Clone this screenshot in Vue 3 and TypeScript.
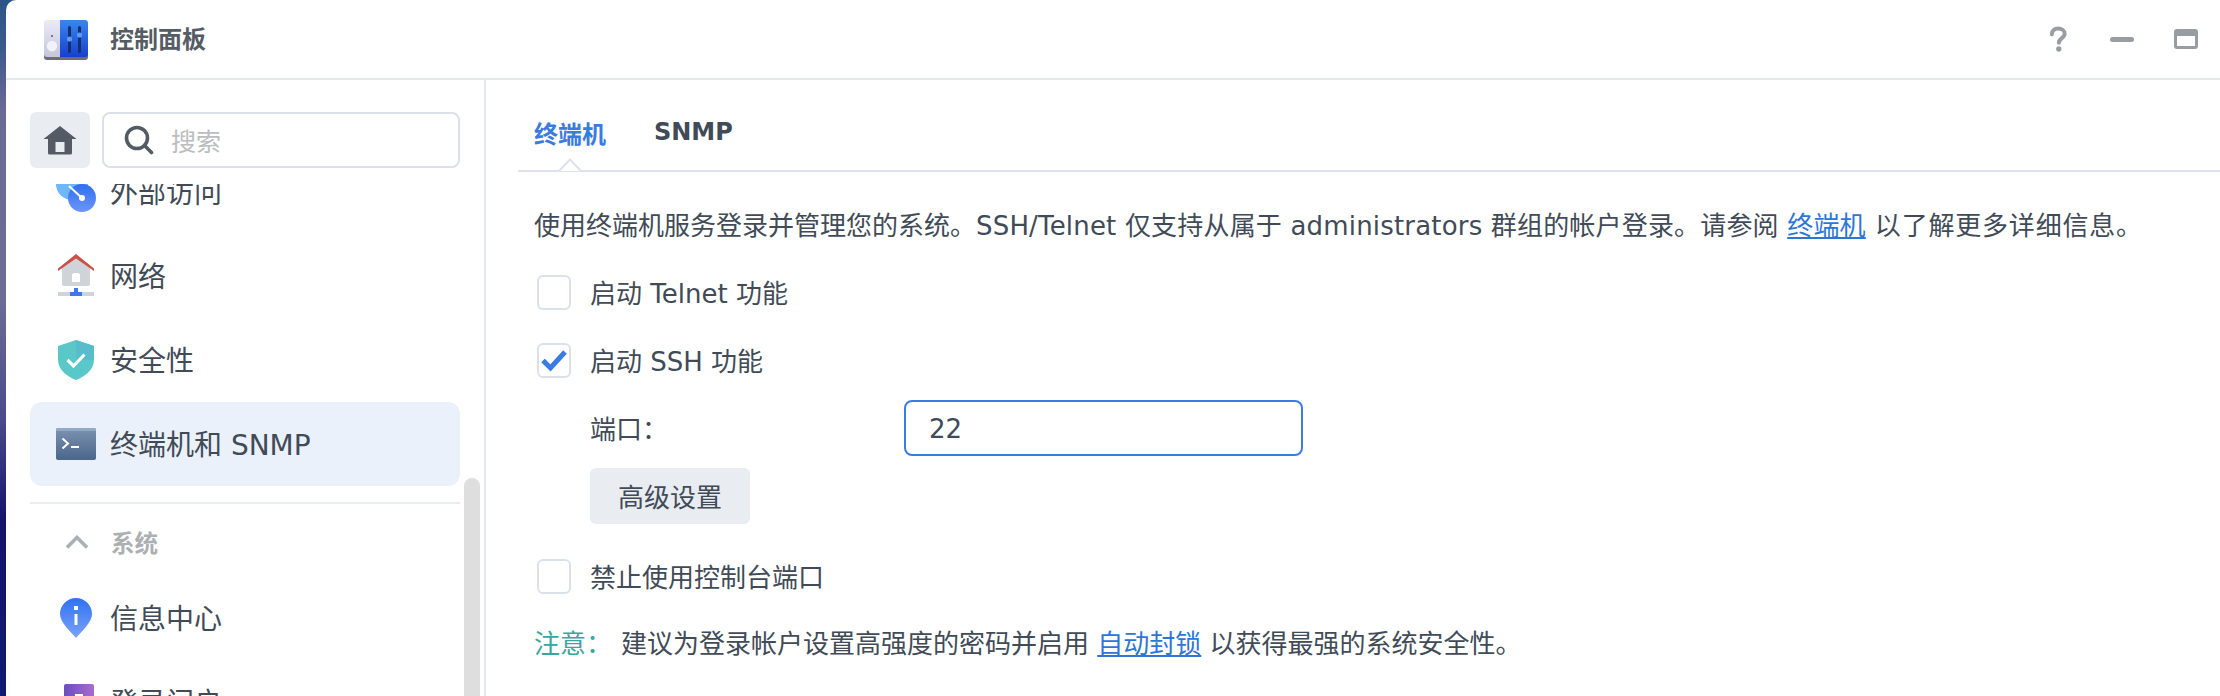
<script setup lang="ts">
const port: string = '22'
</script>

<template>
  <div class="page">
    <div class="window">
      <header class="titlebar">
        <svg class="app-icon" width="44" height="40" viewBox="0 0 44 40">
          <defs>
            <linearGradient id="ai-l" x1="0" y1="0" x2="0" y2="1"><stop offset="0" stop-color="#eceaf8"/><stop offset="1" stop-color="#c6c6dc"/></linearGradient>
            <linearGradient id="ai-r" x1="0" y1="0" x2="0" y2="1"><stop offset="0" stop-color="#3a86ee"/><stop offset="1" stop-color="#1640d0"/></linearGradient>
          </defs>
          <rect x="0" y="2" width="44" height="38" rx="3" fill="#6d6d78"/>
          <path d="M3 0H16V37H3A3 3 0 0 1 0 34V3A3 3 0 0 1 3 0Z" fill="url(#ai-l)"/>
          <path d="M16 0H41A3 3 0 0 1 44 3V34A3 3 0 0 1 41 37H16Z" fill="url(#ai-r)"/>
          <rect x="7" y="15" width="2" height="2" fill="#77798a"/>
          <circle cx="8" cy="26" r="5.2" fill="#f2f2fa"/>
          <rect x="24" y="6" width="3" height="27" rx="1.5" fill="#12306f"/>
          <rect x="34" y="6" width="3" height="27" rx="1.5" fill="#12306f"/>
          <circle cx="25.5" cy="19" r="2.6" fill="#5a9cf6"/>
          <circle cx="35.5" cy="15" r="2.6" fill="#5a9cf6"/>
        </svg>
        <span class="title">控制面板</span>
        <div class="win-actions">
          <svg width="19" height="27" viewBox="0 0 20 28" class="wa-help">
            <path d="M3 8.5C3 4.5 6 2.5 9.6 2.5C13.4 2.5 16.5 4.7 16.5 8C16.5 12.6 10.4 12.6 10.4 17.5" fill="none" stroke="#999da2" stroke-width="4.2" stroke-linecap="round"/>
            <circle cx="10.3" cy="24" r="2.8" fill="#999da2"/>
          </svg>
          <span class="wa-min"></span>
          <span class="wa-max"></span>
        </div>
      </header>

      <div class="main">
        <aside class="sidebar">
          <div class="search-row">
            <button class="home-btn">
              <svg width="34" height="30" viewBox="0 0 34 30">
                <path d="M17 1L33.5 14H29V28A1.5 1.5 0 0 1 27.5 29.5H6.5A1.5 1.5 0 0 1 5 28V14H.5Z" fill="#545b64"/>
                <rect x="12.5" y="17" width="9" height="10" fill="#e9edf1"/>
              </svg>
            </button>
            <div class="search">
              <svg width="30" height="30" viewBox="0 0 30 30">
                <circle cx="13" cy="13" r="10.5" fill="none" stroke="#545b64" stroke-width="3.6"/>
                <path d="M20.5 20.5L27.5 27.5" stroke="#545b64" stroke-width="3.6" stroke-linecap="round"/>
              </svg>
              <span class="placeholder">搜索</span>
            </div>
          </div>

          <div class="nav-clip">
            <div class="nav">
              <div class="item">
                <svg class="ico" width="40" height="40" viewBox="0 0 40 40">
                  <defs><linearGradient id="ea" x1="0" y1="0" x2="0" y2="1"><stop offset="0" stop-color="#2f6ff0"/><stop offset="1" stop-color="#6c96fb"/></linearGradient></defs>
                  <circle cx="16" cy="12" r="16" fill="#6cb8fb"/>
                  <circle cx="26" cy="26" r="14" fill="url(#ea)"/>
                  <path d="M13 14L26 26" stroke="#fff" stroke-width="2"/>
                  <circle cx="26" cy="26" r="3" fill="#fff"/>
                </svg>
                <span>外部访问</span>
              </div>
              <div class="item">
                <svg class="ico" width="40" height="44" viewBox="0 0 40 44">
                  <path d="M6 12L20 2L34 12V30A2 2 0 0 1 32 32H8A2 2 0 0 1 6 30Z" fill="#d0d3d8"/>
                  <path d="M2 17V14.500L20 0L38 14.500V17L20 4.500Z" fill="#cd5048"/>
                  <path d="M16 28V21.500A2.500 2.500 0 0 1 18.500 19H21.500A2.500 2.500 0 0 1 24 21.500V28Z" fill="#fff"/>
                  <rect x="2" y="38" width="36" height="4" fill="#d0d3d8"/>
                  <path d="M18 34H22V38H26V42H14V38H18Z" fill="#3d78ee"/>
                </svg>
                <span>网络</span>
              </div>
              <div class="item">
                <svg class="ico" width="40" height="40" viewBox="0 0 40 40">
                  <path d="M20 0L38 6V20C38 30 28 37 20 40C12 37 2 30 2 20V6Z" fill="#5ac8c8"/>
                  <path d="M20 0L38 6V20L20 20Z" fill="#58bccd"/>
                  <path d="M11.500 20L17.500 26L28.500 14.500" fill="none" stroke="#fff" stroke-width="3.200"/>
                </svg>
                <span>安全性</span>
              </div>
              <div class="item active">
                <svg class="ico" width="40" height="32" viewBox="0 0 40 32">
                  <defs><linearGradient id="tm" x1="0" y1="0" x2="0" y2="1"><stop offset="0" stop-color="#7c93b2"/><stop offset="1" stop-color="#4a668b"/></linearGradient></defs>
                  <rect width="40" height="32" rx="2" fill="url(#tm)"/>
                  <path d="M2 0H38A2 2 0 0 1 40 2V3H0V2A2 2 0 0 1 2 0Z" fill="#93a8c3"/>
                  <path d="M6.500 10.500L12 15.500L6.500 20.500" fill="none" stroke="#fff" stroke-width="2"/>
                  <rect x="15" y="18" width="8" height="2" fill="#fff"/>
                </svg>
                <span>终端机和 SNMP</span>
              </div>
              <div class="divider"></div>
              <div class="group">
                <svg class="chev" width="24" height="14" viewBox="0 0 24 14">
                  <path d="M2 12.500L12 2.500L22 12.500" fill="none" stroke="#adb0b3" stroke-width="3.600"/>
                </svg>
                <span>系统</span>
              </div>
              <div class="item">
                <svg class="ico" width="40" height="40" viewBox="0 0 40 40">
                  <defs><linearGradient id="inf" x1="0" y1="0" x2="0" y2="1"><stop offset="0" stop-color="#2f72f2"/><stop offset="1" stop-color="#7aa2f8"/></linearGradient></defs>
                  <path d="M20 0A16 16 0 0 1 36 16C36 24 26 33 20 40C14 33 4 24 4 16A16 16 0 0 1 20 0Z" fill="url(#inf)"/>
                  <rect x="18" y="8" width="4" height="4" fill="#fff"/>
                  <rect x="18.500" y="16" width="3" height="11" fill="#fff"/>
                </svg>
                <span>信息中心</span>
              </div>
              <div class="item">
                <svg class="ico" width="40" height="40" viewBox="0 0 40 40">
                  <defs><linearGradient id="lp" x1="0" y1="0" x2="1" y2="0"><stop offset="0" stop-color="#6a4ebf"/><stop offset="1" stop-color="#a96ccb"/></linearGradient></defs>
                  <rect x="8" y="2" width="30" height="36" rx="2" fill="url(#lp)"/>
                  <rect x="19" y="12" width="8" height="14" fill="#fff"/>
                </svg>
                <span>登录门户</span>
              </div>
            </div>
            <div class="scrollbar"></div>
          </div>
        </aside>

        <section class="content">
          <nav class="tabs">
            <span class="tab tab-on">终端机</span>
            <span class="tab">SNMP</span>
            <svg class="notch" width="26" height="14" viewBox="0 0 26 14">
              <path d="M0 13H2L13 1.500L24 13H26" fill="#fff" stroke="#dde2eb" stroke-width="2"/>
            </svg>
          </nav>
          <div class="pane">
            <p class="desc">使用终端机服务登录并管理您的系统。<span class="desc-rest">SSH/Telnet 仅支持从属于 administrators 群组的帐户登录。请参阅 <a>终端机</a></span><span class="desc-tail"> 以了解更多详细信息。</span></p>
            <label class="check c1"><span class="box"></span><span class="lbl">启动 Telnet 功能</span></label>
            <label class="check c2">
              <span class="box">
                <svg width="28" height="24" viewBox="0 0 28 24"><path d="M3 12.500L10.500 20L25 4" fill="none" stroke="#3a7be6" stroke-width="5"/></svg>
              </span>
              <span class="lbl">启动 SSH 功能</span>
            </label>
            <div class="port-row">
              <span class="port-label">端口：</span>
              <div class="port-input">{{ port }}</div>
            </div>
            <button class="adv">高级设置</button>
            <label class="check c3"><span class="box"></span><span class="lbl">禁止使用控制台端口</span></label>
            <p class="note"><span class="note-k">注意：</span><span>建议为登录帐户设置高强度的密码并启用 <a>自动封锁</a> 以获得最强的系统安全性。</span></p>
          </div>
        </section>
      </div>
    </div>
  </div>
</template>

<style>
html, body { margin: 0; overflow: hidden; }
</style>

<style scoped>
.page {
  width: 2220px;
  height: 696px;
  overflow: hidden;
  padding-left: 6px;
  box-sizing: border-box;
  background: linear-gradient(180deg, #2c5488 0, #3d5a8c 50px, #6a6a96 110px, #6c6c96 300px, #4a4a8c 420px, #13146a 520px, #0f1a70 696px);
  font-family: "DejaVu Sans", "Noto Sans CJK SC", sans-serif;
  color: #414b57;
}
.window {
  height: 696px;
  background: #fff;
  border-radius: 10px 0 0 0;
  display: flex;
  flex-direction: column;
}
.titlebar {
  height: 78px;
  flex: none;
  border-bottom: 2px solid #e5e8ed;
  display: flex;
  align-items: center;
  padding: 0 22px 0 38px;
}
.app-icon { margin-top: 2px; }
.title {
  margin: 0 0 4px 22px;
  font-size: 24px;
  font-weight: 700;
  color: #555c64;
}
.win-actions {
  margin-left: auto;
  display: flex;
  align-items: center;
}
.wa-help { margin-right: 42px; }
.wa-min {
  width: 24px;
  height: 5px;
  border-radius: 3px;
  background: #999da2;
  margin-right: 40px;
}
.wa-max {
  width: 24px;
  height: 20px;
  box-sizing: border-box;
  border: 3px solid #999da2;
  border-top-width: 7px;
  border-radius: 3px;
}
.main {
  flex: 1;
  min-height: 0;
  display: flex;
}
.sidebar {
  width: 480px;
  flex: none;
  box-sizing: border-box;
  border-right: 2px solid #e3e7ee;
  display: flex;
  flex-direction: column;
}
.search-row {
  display: flex;
  gap: 12px;
  padding: 32px 24px 16px;
  flex: none;
}
.home-btn {
  width: 60px;
  height: 56px;
  border: 0;
  padding: 0;
  border-radius: 6px;
  background: #e9edf1;
  display: flex;
  align-items: center;
  justify-content: center;
}
.search {
  width: 358px;
  height: 56px;
  box-sizing: border-box;
  border: 2px solid #dbe0ea;
  border-radius: 8px;
  display: flex;
  align-items: center;
  padding-left: 20px;
}
.placeholder {
  margin-left: 17px;
  font-size: 25px;
  color: #bbbdc0;
}
.nav-clip {
  flex: 1;
  min-height: 0;
  overflow: hidden;
  position: relative;
}
.nav {
  margin: -34px 24px 0;
  display: flex;
  flex-direction: column;
}
.item {
  height: 84px;
  flex: none;
  display: flex;
  align-items: center;
  padding-left: 26px;
  border-radius: 12px;
  font-size: 28px;
  white-space: nowrap;
}
.item span { margin-bottom: 3px; }
.ico {
  width: 40px;
  margin-right: 14px;
  flex: none;
  display: block;
}
.active { background: #eaf1fb; }
.divider {
  height: 2px;
  margin-top: 16px;
  background: #e9ecf0;
  flex: none;
}
.group {
  height: 64px;
  padding: 6px 0 2px 35px;
  flex: none;
  display: flex;
  align-items: center;
  font-size: 23.500px;
  font-weight: 700;
  color: #adb0b3;
}
.chev { margin-right: 22px; }
.scrollbar {
  position: absolute;
  left: 458px;
  top: 294px;
  width: 16px;
  height: 260px;
  border-radius: 8px;
  background: #dedede;
}
.content {
  flex: 1;
  min-width: 0;
  padding: 0 0 0 32px;
}
.tabs {
  height: 90px;
  box-sizing: content-box;
  border-bottom: 2px solid #dde2eb;
  position: relative;
  display: flex;
  align-items: center;
  padding: 0 16px;
  gap: 48px;
}
.tab {
  font-size: 24px;
  font-weight: 700;
  color: #414b57;
  margin-top: 14px;
}
.tab-on { color: #3a7be0; }
.notch {
  position: absolute;
  left: 39px;
  bottom: -2px;
}
.pane {
  padding-left: 16px;
  display: flex;
  flex-direction: column;
  align-items: flex-start;
  font-size: 26px;
}
.desc {
  margin: 36px 0 0;
  line-height: 36px;
  white-space: nowrap;
}
.desc-rest { letter-spacing: 0.18px; }
.desc-tail { letter-spacing: 0.8px; }
a {
  color: #2e75d8;
  text-decoration: underline;
}
.check {
  height: 36px;
  display: flex;
  align-items: center;
  white-space: nowrap;
}
.lbl { margin-bottom: 2px; }
.c1 { margin-top: 30px; }
.c2 { margin-top: 32px; }
.c3 { margin-top: 34px; }
.box {
  width: 34px;
  height: 35px;
  box-sizing: border-box;
  margin: 0 19px 0 3px;
  border: 2px solid #dbe1ea;
  border-radius: 6px;
  display: flex;
  align-items: center;
  justify-content: center;
  flex: none;
}
.port-row {
  margin: 22px 0 0 56px;
  display: flex;
  align-items: center;
}
.port-label { width: 314px; margin-bottom: 2px; }
.port-input {
  width: 399px;
  height: 56px;
  box-sizing: border-box;
  border: 2px solid #3a7de0;
  border-radius: 8px;
  padding: 2px 0 0 23px;
  display: flex;
  align-items: center;
}
.adv {
  margin: 12px 0 0 56px;
  width: 160px;
  height: 56px;
  border: 0;
  border-radius: 6px;
  background: #e9edf1;
  color: #414b57;
  font: inherit;
  padding: 0 0 2px;
}
.note {
  margin: 32px 0 0;
  line-height: 36px;
  white-space: nowrap;
  display: flex;
}
.note-k {
  color: #3aa6a0;
  width: 87px;
}
</style>
